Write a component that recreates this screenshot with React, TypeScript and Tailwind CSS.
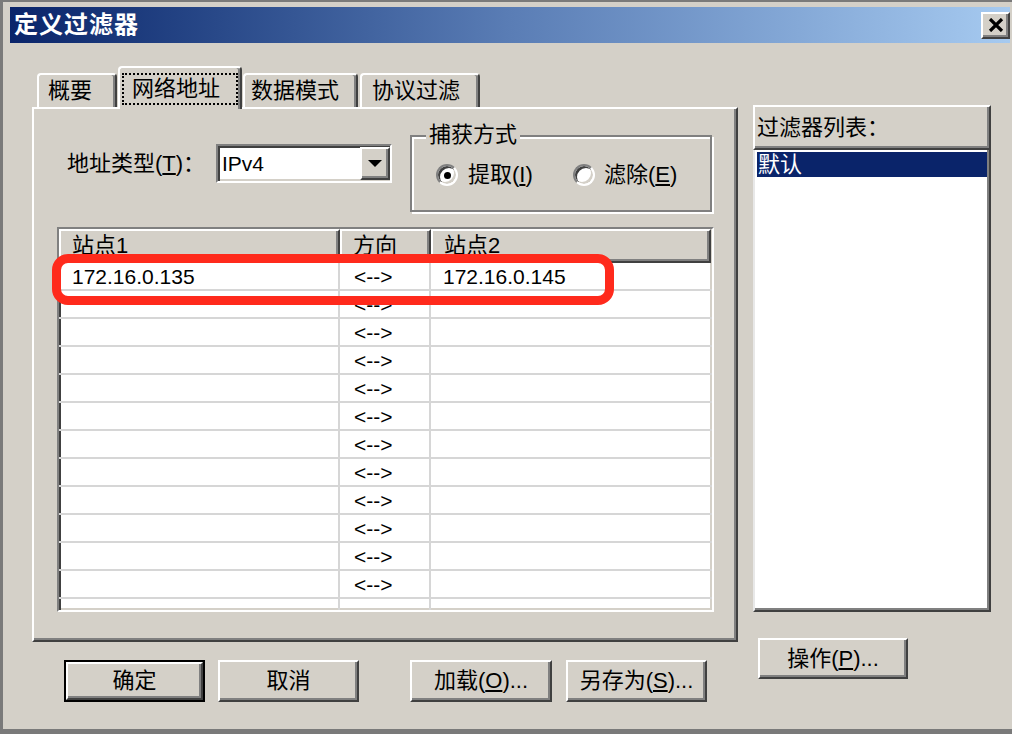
import React from "react";

const raised =
  "border-2 border-t-white border-l-white border-r-[#404040] border-b-[#404040] shadow-[inset_-2px_-2px_0_#808080]";
const sunken =
  "border-2 border-t-[#808080] border-l-[#808080] border-r-white border-b-white shadow-[inset_2px_2px_0_#404040,inset_-2px_-2px_0_#d4d0c8]";

function Btn({
  label,
  w,
  def,
  className = "",
}: {
  label: React.ReactNode;
  w: string;
  def?: boolean;
  className?: string;
}) {
  const inner = (
    <div className={`${raised} h-full flex items-center justify-center bg-[#d4d0c8] text-[22px] leading-none text-black`}>
      {label}
    </div>
  );
  if (def) {
    return <div className={`${w} h-[42px] border-2 border-black ${className}`}>{inner}</div>;
  }
  return <div className={`${w} h-[42px] ${className}`}>{inner}</div>;
}

function Radio({ checked }: { checked?: boolean }) {
  return (
    <div className="w-[22px] h-[22px] rounded-full border-2 border-t-[#808080] border-l-[#808080] border-r-white border-b-white bg-white shadow-[inset_2px_2px_0_#404040,inset_-2px_-2px_0_#d4d0c8] flex items-center justify-center">
      {checked && <div className="w-[7px] h-[7px] rounded-full bg-black" />}
    </div>
  );
}

export default function App() {
  const rows = Array.from({ length: 12 });
  return (
    <div className="w-[1012px] h-[734px] bg-[#d4d0c8] border-l-[3px] border-t-[2px] border-b-[5px] border-[#7a7a7a] overflow-hidden font-['Liberation_Sans','Noto_Sans_CJK_SC',sans-serif] text-black select-none">
      {/* Title bar */}
      <div className="ml-[7px] mt-[5px] mr-[2px] h-[36px] bg-linear-to-r from-[#0a246a] via-[#5a7db5] to-[#a6caf0] flex items-center justify-between">
        <div className="pl-[4px] text-white font-bold text-[24px] leading-none tracking-[1px]">定义过滤器</div>
        <div className={`${raised} w-[29px] h-[27px] mr-[0px] bg-[#d4d0c8] flex items-center justify-center`}>
          <svg width="16" height="14" viewBox="0 0 16 14">
            <path d="M2 1 L14 13 M14 1 L2 13" stroke="black" strokeWidth="3.2" />
          </svg>
        </div>
      </div>

      {/* Body */}
      <div className="flex ml-[29px] mt-[23px]">
        {/* Left column */}
        <div className="w-[706px] flex flex-col">
          {/* Tabs */}
          <div className="h-[41px] flex items-end pl-[5px]">
            <div className="w-[80px] h-[34px] border-t-2 border-l-2 border-white border-r-2 border-r-[#404040] rounded-t-[4px] shadow-[inset_-2px_0_0_#808080] flex items-center pl-[9px] text-[22px] leading-none">
              概要
            </div>
            <div className="ml-[1px] w-[124px] h-[43px] -mb-[2px] relative z-10 bg-[#d4d0c8] border-t-2 border-l-2 border-white border-r-2 border-r-[#404040] rounded-t-[4px] shadow-[inset_-2px_0_0_#808080] flex items-start pt-[5px] pl-[2px]">
              <div className="border-2 border-dotted border-black h-[32px] w-[116px] flex items-center pl-[8px] text-[22px] leading-none">
                网络地址
              </div>
            </div>
            <div className="ml-[1px] w-[115px] h-[34px] border-t-2 border-l-2 border-white border-r-2 border-r-[#404040] rounded-t-[4px] shadow-[inset_-2px_0_0_#808080] flex items-center pl-[6px] text-[22px] leading-none">
              数据模式
            </div>
            <div className="ml-[2px] w-[120px] h-[34px] border-t-2 border-l-2 border-white border-r-2 border-r-[#404040] rounded-t-[4px] shadow-[inset_-2px_0_0_#808080] flex items-center pl-[10px] text-[22px] leading-none">
              协议过滤
            </div>
          </div>

          {/* Panel */}
          <div className={`${raised} h-[535px] pt-[26px] pl-[23px]`}>
            <div className="flex items-start h-[77px]">
              <div className="mt-[9px] ml-[10px] flex items-center">
                <div className="w-[149px] text-[22px] leading-none">
                  地址类型(<span className="underline">T</span>)：
                </div>
                <div className={`${sunken} w-[176px] h-[39px] bg-white flex items-center`}>
                  <div className="flex-1 pl-[4px] text-[21px] leading-none">IPv4</div>
                  <div className={`${raised} w-[30px] h-[33px] mr-[0px] bg-[#d4d0c8] flex items-center justify-center`}>
                    <svg width="14" height="8" viewBox="0 0 14 8">
                      <path d="M0 0 H14 L7 7 Z" fill="black" />
                    </svg>
                  </div>
                </div>
              </div>
              <div className="ml-[18px] w-[302px] h-[77px] relative border-2 border-[#808080] shadow-[inset_2px_2px_0_white,2px_2px_0_white]">
                <div className="absolute left-[14px] -top-[14px] bg-[#d4d0c8] px-[3px] text-[22px] leading-[24px]">
                  捕获方式
                </div>
                <div className="absolute left-[24px] top-[27px] flex items-center">
                  <Radio checked />
                  <div className="ml-[10px] text-[22px] leading-none">
                    提取(<span className="underline">I</span>)
                  </div>
                </div>
                <div className="absolute left-[161px] top-[27px] flex items-center">
                  <Radio />
                  <div className="ml-[9px] text-[22px] leading-none">
                    滤除(<span className="underline">E</span>)
                  </div>
                </div>
              </div>
            </div>

            {/* Table */}
            <div className="mt-[15px] w-[657px] h-[385px] relative">
              <div className={`${sunken} w-full h-full bg-white overflow-hidden flex flex-col`}>
                <div className="flex h-[34px] shrink-0 bg-[#d4d0c8]">
                  <div className={`${raised} w-[281px] pl-[11px] pt-[3px] text-[22px] leading-[24px] overflow-hidden`}>站点1</div>
                  <div className={`${raised} w-[91px] pl-[11px] pt-[3px] text-[22px] leading-[24px] overflow-hidden`}>方向</div>
                  <div className={`${raised} w-[280px] pl-[11px] pt-[3px] text-[22px] leading-[24px] overflow-hidden`}>站点2</div>
                  <div className="flex-1 bg-[#d4d0c8]" />
                </div>
                <div className="flex-1 overflow-hidden">
                  {rows.map((_, i) => (
                    <div key={i} className="flex h-[28px] border-b-2 border-[#d6d6d6] text-[21px] leading-none">
                      <div className="w-[281px] border-r-2 border-[#d6d6d6] pl-[13px] flex items-center">
                        {i === 0 ? "172.16.0.135" : ""}
                      </div>
                      <div className="w-[91px] border-r-2 border-[#d6d6d6] pl-[14px] flex items-center">&lt;--&gt;</div>
                      <div className="w-[280px] pl-[12px] flex items-center">{i === 0 ? "172.16.0.145" : ""}</div>
                    </div>
                  ))}
                  <div className="flex h-[28px]">
                    <div className="w-[281px] border-r-2 border-[#d6d6d6]" />
                    <div className="w-[91px] border-r-2 border-[#d6d6d6]" />
                  </div>
                </div>
              </div>
              <div className="absolute -left-[5px] top-[27px] w-[562px] h-[51px] border-[9px] border-[#ff2a1c] rounded-[16px] pointer-events-none" />
            </div>
          </div>

          {/* Bottom buttons */}
          <div className="flex mt-[18px] ml-[32px]">
            <Btn def w="w-[141px]" label="确定" />
            <Btn w="w-[141px]" className="ml-[13px]" label="取消" />
            <Btn
              w="w-[142px]"
              className="ml-[51px]"
              label={
                <span>
                  加载(<span className="underline">O</span>)...
                </span>
              }
            />
            <Btn
              w="w-[141px]"
              className="ml-[14px]"
              label={
                <span>
                  另存为(<span className="underline">S</span>)...
                </span>
              }
            />
          </div>
        </div>

        {/* Right column */}
        <div className="ml-[15px] mt-[39px] w-[238px] flex flex-col">
          <div className={`${raised} h-[45px] pl-[2px] flex items-center text-[22px] leading-none`}>过滤器列表：</div>
          <div className="h-[462px] border-2 border-t-0 border-l-[#e8e8e8] border-r-[#404040] border-b-[#404040] shadow-[inset_-2px_-2px_0_#808080] bg-white p-[2px]">
            <div className="h-[25px] bg-[#0a246a] text-white text-[22px] leading-none flex items-center pl-[1px]">默认</div>
          </div>
          <Btn
            w="w-[150px]"
            className="mt-[26px] ml-[5px] !h-[41px]"
            label={
              <span>
                操作(<span className="underline">P</span>)...
              </span>
            }
          />
        </div>
      </div>
    </div>
  );
}
